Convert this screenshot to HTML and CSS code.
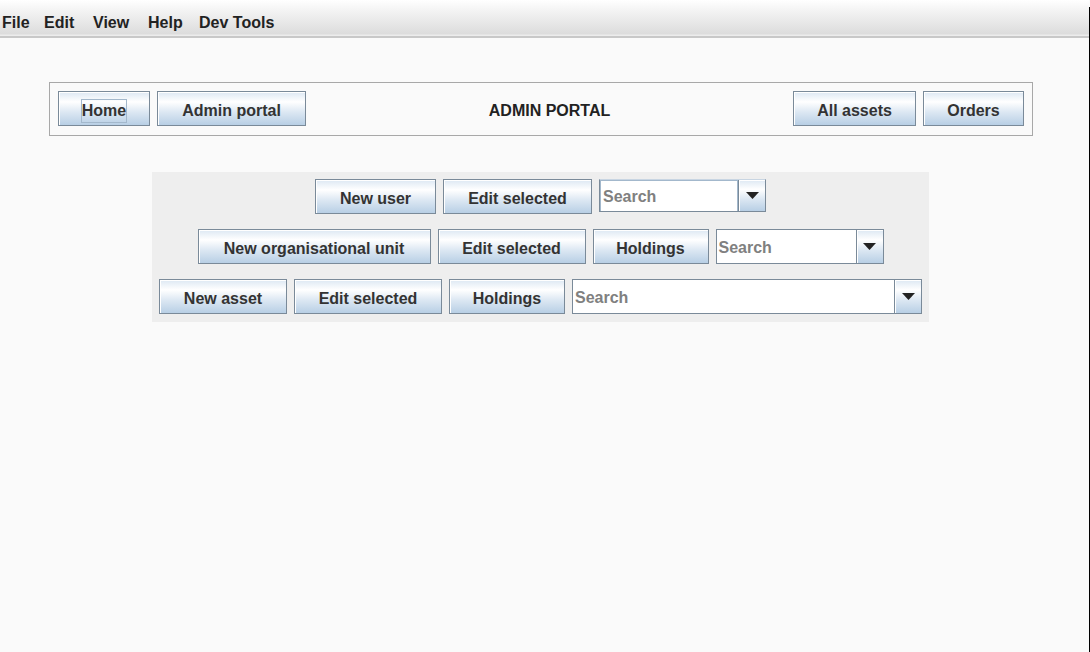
FILE: index.html
```html
<!DOCTYPE html>
<html>
<head>
<meta charset="utf-8">
<link rel="stylesheet" href="styles.css">
</head>
<body>
<div class="frame">
  <div class="window">
    <div class="menubar">
      <span class="menu">File</span>
      <span class="menu">Edit</span>
      <span class="menu">View</span>
      <span class="menu">Help</span>
      <span class="menu">Dev Tools</span>
    </div>
    <div class="content">
      <div class="navbox">
        <button class="btn w-home"><span class="focus">Home</span></button>
        <button class="btn w-admin">Admin portal</button>
        <div class="title">ADMIN PORTAL</div>
        <button class="btn w-assets">All assets</button>
        <button class="btn w-orders">Orders</button>
      </div>
      <div class="panel">
        <div class="row">
          <button class="btn w-newuser">New user</button>
          <button class="btn w-edit1">Edit selected</button>
          <div class="combo combo-focus w-c1">
            <div class="field">Search</div>
            <div class="arrow"><svg width="13" height="7" viewBox="0 0 13 7"><path d="M0 0H13L6.5 7Z" fill="#222"/></svg></div>
          </div>
        </div>
        <div class="row">
          <button class="btn w-neworg">New organisational unit</button>
          <button class="btn w-edit">Edit selected</button>
          <button class="btn w-hold">Holdings</button>
          <div class="combo w-c2">
            <div class="field">Search</div>
            <div class="arrow"><svg width="13" height="7" viewBox="0 0 13 7"><path d="M0 0H13L6.5 7Z" fill="#222"/></svg></div>
          </div>
        </div>
        <div class="row">
          <button class="btn w-newasset">New asset</button>
          <button class="btn w-edit">Edit selected</button>
          <button class="btn w-hold">Holdings</button>
          <div class="combo w-c3">
            <div class="field">Search</div>
            <div class="arrow"><svg width="13" height="7" viewBox="0 0 13 7"><path d="M0 0H13L6.5 7Z" fill="#222"/></svg></div>
          </div>
        </div>
      </div>
    </div>
  </div>
  <div class="edge"></div>
</div>
</body>
</html>
```
FILE: styles.css
```css
* { box-sizing: border-box; }
html, body { margin: 0; padding: 0; }
body {
  width: 1090px;
  height: 652px;
  overflow: hidden;
  background: #fafafa;
  font-family: "Liberation Sans", Arial, sans-serif;
  font-weight: bold;
  font-size: 16px;
  color: #333333;
}
.frame { display: flex; height: 652px; }
.window { width: 1089px; display: flex; flex-direction: column; }
.edge { width: 1px; margin-top: 7px; background: #000; }

.menubar {
  height: 38px;
  display: grid;
  grid-template-columns: 42px 49px 55px 51px auto;
  padding-left: 2px;
  background: linear-gradient(#ffffff 0px, #f4f4f4 10px, #dcdcdc 34px, #ececec 35px, #ececec 36px, #c8c8c8 36px, #c8c8c8 38px);
}
.menu {
  padding-top: 14px;
  line-height: 18px;
  color: #222;
  white-space: nowrap;
}

.content { flex: 1; padding-top: 44px; }

.btn {
  font: inherit;
  color: #333333;
  height: 35px;
  padding: 5px 0 0;
  margin: 0;
  border: 1px solid #7a8a99;
  box-shadow: inset 1px 1px 0 #ffffff;
  background: linear-gradient(#dde8f3 0%, #ffffff 30%, #dde8f3 60%, #b8cfe5 100%);
  white-space: nowrap;
  display: flex;
  align-items: center;
  justify-content: center;
  flex: none;
}

.navbox {
  margin-left: 49px;
  width: 984px;
  height: 54px;
  border: 1px solid #a8a8a8;
  padding: 8px 8px 0 8px;
  display: flex;
  gap: 7px;
  align-items: flex-start;
}
.title {
  flex: 1;
  text-align: center;
  line-height: 35px;
  padding-top: 2px;
  color: #222;
}
.focus {
  border: 1px solid #a3b8cc;
  padding: 2px 0 2px;
  line-height: 18px;
}
.w-home { width: 92px; }
.w-admin { width: 149px; }
.w-assets { width: 123px; }
.w-orders { width: 101px; }

.panel {
  margin-top: 36px;
  margin-left: 152px;
  width: 777px;
  background: #eeeeee;
  padding: 7px 0 8px;
  display: flex;
  flex-direction: column;
  gap: 15px;
}
.row {
  display: flex;
  justify-content: center;
  gap: 7px;
  height: 35px;
  align-items: flex-start;
}
.w-newuser { width: 121px; }
.w-edit1 { width: 149px; }
.w-neworg { width: 233px; }
.w-edit { width: 148px; }
.w-hold { width: 116px; }
.w-newasset { width: 128px; }

.combo {
  height: 35px;
  display: flex;
  border: 1px solid #7a8a99;
  background: #ffffff;
  flex: none;
}
.combo-focus {
  height: 33px;
  border-top-color: #c8d5e2;
}
.combo-focus .field {
  border: 1px solid #a3b8cc;
  border-bottom: none;
}
.w-c1 { width: 167px; }
.w-c2 { width: 168px; }
.w-c3 { width: 350px; }
.field {
  flex: 1;
  color: #808080;
  padding: 2px 0 0 2px;
  display: flex;
  align-items: center;
}
.arrow {
  width: 27px;
  border-left: 1px solid #7a8a99;
  background: linear-gradient(#dde8f3 0%, #ffffff 30%, #dde8f3 60%, #b8cfe5 100%);
  box-shadow: inset 1px 1px 0 #ffffff;
  display: flex;
  align-items: center;
  justify-content: center;
}
```
